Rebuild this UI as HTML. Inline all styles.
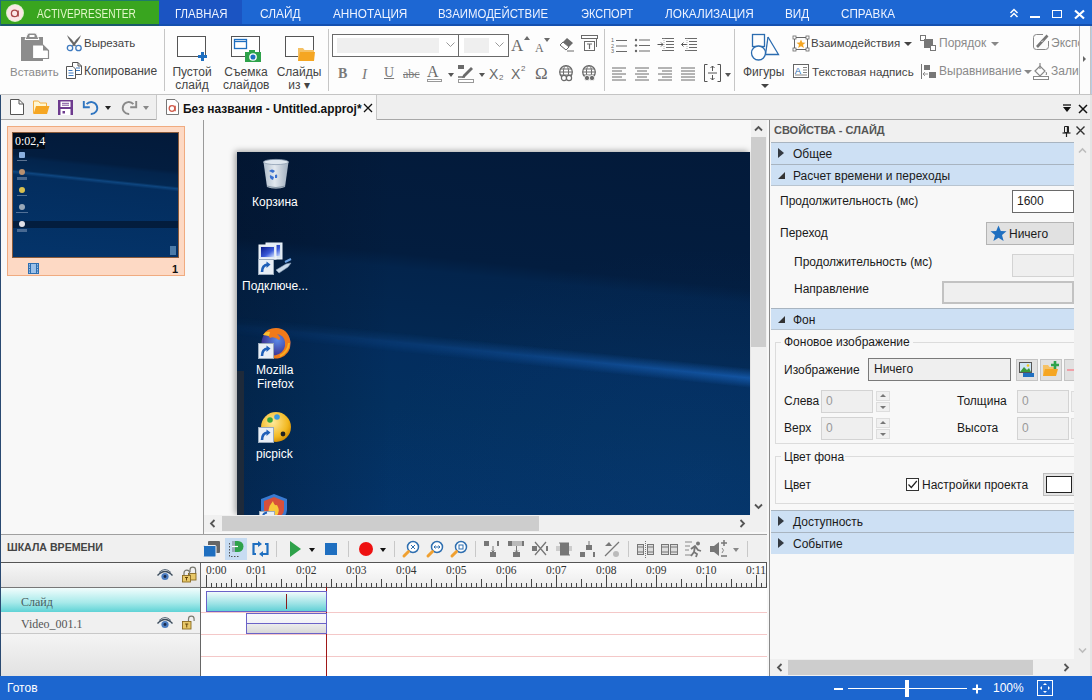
<!DOCTYPE html>
<html><head><meta charset="utf-8">
<style>
*{box-sizing:border-box;margin:0;padding:0}
html,body{width:1092px;height:700px;overflow:hidden;background:#f8f8f8}
body{font-family:"Liberation Sans",sans-serif;font-size:12px;color:#222;position:relative}
.a{position:absolute}
.t{position:absolute;white-space:nowrap;line-height:1}
svg{position:absolute;overflow:visible}
/* tab bar */
#tabs{left:0;top:0;width:1092px;height:26px;background:#1d67d3}
#tabs .tb{position:absolute;top:7px;color:#eef3ff;font-size:12.5px;line-height:14px;white-space:nowrap}
/* ribbon */
#ribbon{left:0;top:26px;width:1092px;height:69px;background:#fdfdfd;border-bottom:1px solid #c8c8c8}
.sep{position:absolute;width:1px;background:#c6c6c6}
.rl{position:absolute;color:#444;font-size:12px;line-height:13px;white-space:nowrap}
.gl{color:#8a8a8a}
/* props */
.sh{position:absolute;left:771px;width:303px;height:22px;background:#cde0f4;border-top:1px solid #a8b4c0}
.sh span{position:absolute;left:22px;top:5px;font-size:12px;line-height:13px;color:#1a1a1a}
.tri{position:absolute;left:7px;top:5px;width:0;height:0;border-top:5px solid transparent;border-bottom:5px solid transparent;border-left:6px solid #343a42}
.tri2{position:absolute;left:7px;top:7px;width:0;height:0;border-left:7px solid transparent;border-bottom:7px solid #333}
.pl{position:absolute;font-size:12px;line-height:13px;color:#1a1a1a;white-space:nowrap}
.inp{position:absolute;background:#efefef;border:1px solid #d3d3d3}
</style></head><body>

<!-- ================= TAB BAR ================= -->
<div id="tabs" class="a">
  <div class="a" style="left:0;top:0;width:159px;height:25px;background:#39a51f"></div>
  <div class="a" style="left:159px;top:0;width:83px;height:25px;background:#1b54c2"></div>
  <div class="a" style="left:0;top:24px;width:1092px;height:2px;background:#1450b0"></div>
  <div class="a" style="left:0;top:24px;width:159px;height:2px;background:#1a5a6a"></div>
  <div class="a" style="left:0;top:0;width:159px;height:1px;background:#1f7a6a"></div>
  <div class="a" style="left:0;top:0;width:1px;height:26px;background:#1f6a7a"></div>
  <div class="a" style="left:7px;top:5px;width:16px;height:16px;border-radius:50%;background:#fbe6e6;box-shadow:0 0 0 1px #d8f0c8"></div>
  <svg style="left:7px;top:5px" width="16" height="16"><circle cx="7.6" cy="8.4" r="3.2" fill="none" stroke="#a84848" stroke-width="1.3"/><path d="M11.2 5.5 V11.5" stroke="#a84848" stroke-width="1.3"/></svg>
  <div class="tb" style="left:37px;color:#e2f7c8;transform:scaleX(0.814);transform-origin:0 0">ACTIVEPRESENTER</div>
  <div class="tb" style="left:175px;transform:scaleX(0.914);transform-origin:0 0">ГЛАВНАЯ</div>
  <div class="tb" style="left:259.5px;transform:scaleX(0.953);transform-origin:0 0">СЛАЙД</div>
  <div class="tb" style="left:332.5px;transform:scaleX(0.942);transform-origin:0 0">АННОТАЦИЯ</div>
  <div class="tb" style="left:438px;transform:scaleX(0.914);transform-origin:0 0">ВЗАИМОДЕЙСТВИЕ</div>
  <div class="tb" style="left:581px;transform:scaleX(0.882);transform-origin:0 0">ЭКСПОРТ</div>
  <div class="tb" style="left:665px;transform:scaleX(0.943);transform-origin:0 0">ЛОКАЛИЗАЦИЯ</div>
  <div class="tb" style="left:785px;transform:scaleX(0.942);transform-origin:0 0">ВИД</div>
  <div class="tb" style="left:841px;transform:scaleX(0.934);transform-origin:0 0">СПРАВКА</div>
  <svg style="left:1008px;top:8px" width="12" height="10"><path d="M2.5 5 L6 1.5 L9.5 5 M2.5 9 L6 5.5 L9.5 9" fill="none" stroke="#fff" stroke-width="1.5"/></svg>
  <div class="a" style="left:1030px;top:16px;width:10px;height:2px;background:#fff"></div>
  <div class="a" style="left:1052px;top:10px;width:10px;height:8px;border:1.3px solid #fff;border-top-width:1.8px"></div>
  <svg style="left:1074px;top:10px" width="11" height="9"><path d="M1 0.5 L10 8.5 M10 0.5 L1 8.5" stroke="#fff" stroke-width="2.2"/></svg>
</div>


<!-- ================= RIBBON ================= -->
<div class="a" style="left:0;top:26px;width:1092px;height:69px;background:#fdfdfd;border-bottom:1px solid #c4c4c4"></div>
<div class="sep" style="left:164px;top:29px;height:62px"></div>
<div class="sep" style="left:328px;top:29px;height:62px"></div>
<div class="sep" style="left:604px;top:29px;height:62px"></div>
<div class="sep" style="left:734px;top:29px;height:62px"></div>
<!-- scroll btn -->
<div class="a" style="left:1079px;top:26px;width:12px;height:67px;background:#f4f4f4;border:1px solid #c8c8c8"></div>
<div class="a" style="left:1083px;top:55px;width:0;height:0;border-top:4px solid transparent;border-bottom:4px solid transparent;border-left:4px solid #555"></div>

<!-- paste -->
<svg style="left:20px;top:32px" width="30" height="31">
  <rect x="1" y="5" width="22" height="24" fill="#8c8c8c"/>
  <path d="M5 7.5 L7 3 Q7.5 1 9 1 H15 Q16.5 1 17 3 L19 7.5 Z" fill="#8c8c8c" stroke="#fdfdfd" stroke-width="1"/>
  <rect x="9.5" y="3" width="5" height="2" fill="#fdfdfd"/>
  <path d="M12.5 13 H23 L28.5 18.5 V26.5 H12.5 Z" fill="#fff" stroke="#8c8c8c" stroke-width="1.2"/>
  <path d="M23 13 L28.5 18.5 H23 Z" fill="#8c8c8c"/>
</svg>
<div class="rl gl" style="left:10px;top:66px;font-size:11.5px">Вставить</div>
<!-- cut -->
<svg style="left:65px;top:34px" width="18" height="18">
  <path d="M2 1 Q4 7 10 12.5 L11 11.5 Q7 5 2 1 Z" fill="#666"/>
  <path d="M16 1 Q14 7 8 12.5 L7 11.5 Q11 5 16 1 Z" fill="#666"/>
  <circle cx="5" cy="14" r="2.7" fill="none" stroke="#3f7bc0" stroke-width="1.3"/>
  <circle cx="13.5" cy="14" r="2.7" fill="none" stroke="#3f7bc0" stroke-width="1.3"/>
</svg>
<div class="rl" style="left:84px;top:37px;font-size:11.5px">Вырезать</div>
<!-- copy -->
<svg style="left:66px;top:62px" width="17" height="17">
  <path d="M6.5 0.5 H12 L15.5 4 V12.5 H6.5 Z" fill="#fff" stroke="#555"/>
  <path d="M12 0.5 V4 H15.5" fill="none" stroke="#555"/>
  <path d="M0.5 4.5 H7 L9.5 7 V16.5 H0.5 Z" fill="#fff" stroke="#555"/>
  <path d="M2.5 8.5 H6.5 M2.5 11 H7.5 M2.5 13.5 H7.5 M10 6 H14 M10 8.5 H14" stroke="#3f7bc0" stroke-width="1"/>
</svg>
<div class="rl" style="left:84px;top:65px">Копирование</div>

<!-- blank slide -->
<svg style="left:177px;top:36px" width="30" height="26">
  <rect x="0.5" y="0.5" width="28" height="20" fill="#fff" stroke="#555"/>
  <path d="M25.5 16 V25 M21 20.5 H30" stroke="#1f6fc0" stroke-width="3"/>
</svg>
<div class="rl" style="left:172px;top:66px;text-align:center;width:40px">Пустой<br>слайд</div>
<!-- capture -->
<svg style="left:231px;top:36px" width="31" height="26">
  <rect x="0.5" y="0.5" width="28" height="20" fill="#fff" stroke="#555"/>
  <rect x="3.5" y="3.5" width="12" height="9" fill="#fff" stroke="#1f6fc0" stroke-width="1.3"/>
  <path d="M3.5 5.5 H15.5" stroke="#1f6fc0" stroke-width="1.3"/>
  <rect x="14" y="16" width="16" height="10" fill="#2ea24a"/>
  <rect x="18" y="14" width="6" height="3" fill="#2ea24a"/>
  <circle cx="22" cy="21" r="3.2" fill="#1f6fc0" stroke="#fff" stroke-width="1.3"/>
</svg>
<div class="rl" style="left:223px;top:66px;text-align:center;width:46px">Съемка<br>слайдов</div>
<!-- slides from -->
<svg style="left:285px;top:36px" width="31" height="26">
  <rect x="0.5" y="0.5" width="28" height="20" fill="#fff" stroke="#555"/>
  <path d="M13 12 H18 L19.5 14 H29 V25 H13 Z" fill="#f5c165"/>
  <path d="M13 25 L15 16 H30 L29 25 Z" fill="#f5a623"/>
</svg>
<div class="rl" style="left:276px;top:66px;text-align:center;width:46px">Слайды<br>из &#x25BE;</div>

<!-- font combo -->
<div class="a" style="left:332px;top:34px;width:127px;height:23px;border:1px solid #6a6a6a;background:#fff"></div>
<div class="a" style="left:337px;top:38px;width:102px;height:15px;background:#efefef"></div>
<svg style="left:446px;top:42px" width="10" height="6"><path d="M0.5 0.5 L4.5 4.5 L8.5 0.5" fill="none" stroke="#999" stroke-width="1"/></svg>
<div class="a" style="left:458px;top:34px;width:51px;height:23px;border:1px solid #6a6a6a;background:#fff"></div>
<div class="a" style="left:464px;top:38px;width:25px;height:15px;background:#efefef"></div>
<svg style="left:495px;top:42px" width="10" height="6"><path d="M0.5 0.5 L4.5 4.5 L8.5 0.5" fill="none" stroke="#999" stroke-width="1"/></svg>
<!-- grow/shrink font -->
<div class="t" style="left:511px;top:37px;font-family:'Liberation Serif';font-size:17px;color:#6a6a6a">A</div>
<div class="a" style="left:524px;top:36px;width:0;height:0;border-left:3px solid transparent;border-right:3px solid transparent;border-bottom:4px solid #6a6a6a"></div>
<div class="t" style="left:535px;top:42px;font-family:'Liberation Serif';font-size:12px;color:#6a6a6a">A</div>
<div class="a" style="left:544px;top:38px;width:0;height:0;border-left:3px solid transparent;border-right:3px solid transparent;border-top:4px solid #6a6a6a"></div>
<!-- eraser -->
<svg style="left:558px;top:36px" width="18" height="16">
  <path d="M2 9 L9 2 L15 7 L8 14 Z" fill="#6a6a6a"/>
  <path d="M2 9 L5 6 L11 11 L8 14 Z" fill="#fff" stroke="#6a6a6a"/>
  <path d="M9 15 H16" stroke="#6a6a6a"/>
</svg>
<!-- textbox -->
<svg style="left:581px;top:35px" width="18" height="17">
  <rect x="0.5" y="0.5" width="16" height="3" fill="#fff" stroke="#6a6a6a"/>
  <rect x="3.5" y="6.5" width="10" height="9" fill="#fff" stroke="#6a6a6a"/>
  <path d="M6 9 H11 M8.5 9 V14" stroke="#6a6a6a" stroke-width="1.2"/>
  <path d="M15.5 3.5 V12" stroke="#6a6a6a"/>
</svg>
<!-- row 2: B I U abc -->
<div class="t" style="left:338px;top:67px;font-family:'Liberation Serif';font-weight:bold;font-size:14px;color:#7a7a7a">B</div>
<div class="t" style="left:362px;top:67px;font-family:'Liberation Serif';font-style:italic;font-size:15px;color:#7a7a7a">I</div>
<div class="t" style="left:384px;top:66px;font-family:'Liberation Serif';font-size:14px;color:#7a7a7a;text-decoration:underline">U</div>
<div class="t" style="left:403px;top:68px;font-family:'Liberation Serif';font-size:12px;color:#7a7a7a;text-decoration:line-through">abc</div>
<div class="t" style="left:427px;top:64px;font-family:'Liberation Serif';font-size:16px;color:#6a6a6a">A</div>
<div class="a" style="left:427px;top:79px;width:15px;height:3px;border:1px solid #999;background:#fff"></div>
<div class="a" style="left:448px;top:73px;width:0;height:0;border-left:3.5px solid transparent;border-right:3.5px solid transparent;border-top:4px solid #555"></div>
<svg style="left:458px;top:65px" width="17" height="18">
  <rect x="0" y="0" width="6" height="4" fill="#6a6a6a"/>
  <path d="M5 10 L13 2 L15 4 L7 12 L4 13 Z" fill="#6a6a6a"/>
  <rect x="0.5" y="14.5" width="15" height="3" fill="#fff" stroke="#999"/>
  <path d="M0 12 H7" stroke="#6a6a6a" stroke-width="1.5"/>
</svg>
<div class="a" style="left:479px;top:73px;width:0;height:0;border-left:3.5px solid transparent;border-right:3.5px solid transparent;border-top:4px solid #555"></div>
<div class="t" style="left:489px;top:67px;font-size:14px;color:#6a6a6a">X</div>
<div class="t" style="left:499px;top:74px;font-size:8px;color:#6a6a6a">2</div>
<div class="t" style="left:511px;top:67px;font-size:14px;color:#6a6a6a">X</div>
<div class="t" style="left:521px;top:65px;font-size:8px;color:#6a6a6a">2</div>
<div class="t" style="left:535px;top:65px;font-family:'Liberation Serif';font-size:17px;color:#6a6a6a">&#937;</div>
<svg style="left:558px;top:65px" width="18" height="17">
  <circle cx="8" cy="7" r="6.3" fill="none" stroke="#6a6a6a" stroke-width="1.3"/>
  <ellipse cx="8" cy="7" rx="2.6" ry="6.3" fill="none" stroke="#6a6a6a" stroke-width="1"/>
  <path d="M1.7 7 H14.3 M2.5 4 H13.5 M2.5 10 H13.5" stroke="#6a6a6a" stroke-width="1"/>
  <circle cx="6" cy="13" r="2.6" fill="#fff" stroke="#6a6a6a" stroke-width="1.2"/>
  <circle cx="11" cy="13" r="2.6" fill="#fff" stroke="#6a6a6a" stroke-width="1.2"/>
</svg>
<svg style="left:581px;top:65px" width="18" height="17">
  <circle cx="8" cy="7" r="6.3" fill="none" stroke="#6a6a6a" stroke-width="1.3"/>
  <ellipse cx="8" cy="7" rx="2.6" ry="6.3" fill="none" stroke="#6a6a6a" stroke-width="1"/>
  <path d="M1.7 7 H14.3 M2.5 4 H13.5 M2.5 10 H13.5" stroke="#6a6a6a" stroke-width="1"/>
  <circle cx="6" cy="13" r="2.6" fill="#6a6a6a" stroke="#fff" stroke-width="0.8"/>
  <circle cx="11" cy="13" r="2.6" fill="#6a6a6a" stroke="#fff" stroke-width="0.8"/>
</svg>

<!-- paragraph group -->
<svg style="left:611px;top:37px" width="18" height="16">
  <text x="0" y="5" font-size="5.5" fill="#666" font-family="Liberation Sans">1</text>
  <text x="0" y="10.5" font-size="5.5" fill="#666" font-family="Liberation Sans">2</text>
  <text x="0" y="16" font-size="5.5" fill="#666" font-family="Liberation Sans">3</text>
  <path d="M5 3.5 H16 M5 9 H16 M5 14.5 H16" stroke="#6a6a6a" stroke-width="1.1"/>
</svg>
<svg style="left:634px;top:37px" width="18" height="16">
  <circle cx="2" cy="3" r="1.2" fill="#666"/><circle cx="2" cy="8.5" r="1.2" fill="#666"/><circle cx="2" cy="14" r="1.2" fill="#666"/>
  <path d="M5 3 H16 M5 8.5 H16 M5 14 H16" stroke="#6a6a6a" stroke-width="1.1"/>
</svg>
<svg style="left:657px;top:37px" width="18" height="16">
  <path d="M5 1.5 H17 M9 4.5 H17 M9 7.5 H17 M9 10.5 H17 M5 13.5 H17" stroke="#6a6a6a" stroke-width="1"/>
  <path d="M0.5 7.5 H6 M4 5.5 L6 7.5 L4 9.5" fill="none" stroke="#555" stroke-width="1"/>
  <path d="M7 1 V15" stroke="#999" stroke-width="0.8" stroke-dasharray="1 1"/>
</svg>
<svg style="left:680px;top:37px" width="18" height="16">
  <path d="M5 1.5 H17 M9 4.5 H17 M9 7.5 H17 M9 10.5 H17 M5 13.5 H17" stroke="#6a6a6a" stroke-width="1"/>
  <path d="M7 7.5 H1.5 M3.5 5.5 L1.5 7.5 L3.5 9.5" fill="none" stroke="#555" stroke-width="1"/>
  <path d="M7 1 V15" stroke="#999" stroke-width="0.8" stroke-dasharray="1 1"/>
</svg>
<svg style="left:611px;top:66px" width="17" height="15">
  <path d="M1 2 H15 M1 5 H11 M1 8 H15 M1 11 H11 M1 14 H15" stroke="#6a6a6a" stroke-width="1"/>
</svg>
<svg style="left:634px;top:66px" width="17" height="15">
  <path d="M1 2 H15 M3 5 H13 M1 8 H15 M3 11 H13 M1 14 H15" stroke="#6a6a6a" stroke-width="1"/>
</svg>
<svg style="left:657px;top:66px" width="17" height="15">
  <path d="M1 2 H15 M5 5 H15 M1 8 H15 M5 11 H15 M1 14 H15" stroke="#6a6a6a" stroke-width="1"/>
</svg>
<svg style="left:680px;top:66px" width="17" height="15">
  <path d="M1 2 H15 M1 5 H15 M1 8 H15 M1 11 H15 M1 14 H15" stroke="#6a6a6a" stroke-width="1"/>
</svg>
<svg style="left:704px;top:64px" width="18" height="18">
  <path d="M3.5 0.5 H0.5 V17.5 H3.5 M13.5 0.5 H16.5 V17.5 H13.5" fill="none" stroke="#555"/>
  <path d="M4 9 H13 M8.5 2 V7 M6.5 4 L8.5 2 L10.5 4 M8.5 11 V16 M6.5 14 L8.5 16 L10.5 14" fill="none" stroke="#555" stroke-width="1"/>
</svg>
<div class="a" style="left:725px;top:73px;width:0;height:0;border-left:3.5px solid transparent;border-right:3.5px solid transparent;border-top:4px solid #555"></div>

<!-- shapes -->
<svg style="left:750px;top:33px" width="32" height="30">
  <rect x="2.5" y="1.5" width="12" height="12" fill="none" stroke="#2b6cb0" stroke-width="1.3"/>
  <path d="M18 4 L28.5 21.5 H15.5" fill="none" stroke="#2b6cb0" stroke-width="1.3"/>
  <circle cx="8.5" cy="20" r="7" fill="#fff" stroke="#2b6cb0" stroke-width="1.3"/>
  <path d="M15.5 21.5 L18 4" fill="none" stroke="#2b6cb0" stroke-width="1.3"/>
</svg>
<div class="rl" style="left:743px;top:66px">Фигуры</div>
<div class="a" style="left:761px;top:84px;width:0;height:0;border-left:4px solid transparent;border-right:4px solid transparent;border-top:4px solid #444"></div>
<!-- interactions -->
<svg style="left:793px;top:36px" width="16" height="15">
  <rect x="1.5" y="1.5" width="13" height="12" fill="none" stroke="#666" stroke-width="1"/>
  <rect x="0" y="0" width="3" height="3" fill="#fff" stroke="#666" stroke-width="0.8"/>
  <rect x="13" y="0" width="3" height="3" fill="#fff" stroke="#666" stroke-width="0.8"/>
  <rect x="0" y="12" width="3" height="3" fill="#fff" stroke="#666" stroke-width="0.8"/>
  <rect x="13" y="12" width="3" height="3" fill="#fff" stroke="#666" stroke-width="0.8"/>
  <path d="M8 3.5 L9.3 6.6 L12.5 6.8 L10 8.8 L10.9 12 L8 10.2 L5.1 12 L6 8.8 L3.5 6.8 L6.7 6.6 Z" fill="#f5a623"/>
</svg>
<div class="rl" style="left:811px;top:37px;font-size:11.5px">Взаимодействия</div>
<div class="a" style="left:904px;top:42px;width:0;height:0;border-left:4px solid transparent;border-right:4px solid transparent;border-top:4px solid #444"></div>
<!-- text caption -->
<svg style="left:793px;top:64px" width="16" height="14">
  <rect x="0.5" y="0.5" width="15" height="13" fill="#fff" stroke="#666"/>
  <text x="1.8" y="9.5" font-size="9.5" fill="#2b6cb0" font-family="Liberation Sans">A</text>
  <path d="M10 3.5 H14 M10 6 H14 M10 8.5 H14 M2 11 H14" stroke="#777" stroke-width="0.9"/>
</svg>
<div class="rl" style="left:812px;top:65px;font-size:11.6px">Текстовая надпись</div>
<!-- order -->
<svg style="left:920px;top:35px" width="17" height="17">
  <rect x="0.5" y="0.5" width="5" height="5" fill="#fff" stroke="#777"/>
  <rect x="4" y="4" width="9" height="9" fill="#777"/>
  <rect x="10.5" y="10.5" width="5" height="5" fill="#fff" stroke="#777"/>
</svg>
<div class="rl gl" style="left:939px;top:37px">Порядок</div>
<div class="a" style="left:991px;top:42px;width:0;height:0;border-left:4px solid transparent;border-right:4px solid transparent;border-top:4px solid #888"></div>
<!-- align -->
<svg style="left:920px;top:64px" width="17" height="15">
  <path d="M1.5 0 V15" stroke="#777"/>
  <rect x="4" y="1" width="6" height="5" fill="#777"/>
  <rect x="9" y="8" width="7" height="6" fill="#777"/>
  <path d="M3 10 H8 M5 8 L3 10 L5 12" fill="none" stroke="#777" stroke-width="0.8"/>
</svg>
<div class="rl gl" style="left:939px;top:65px">Выравнивание</div>
<div class="a" style="left:1024px;top:70px;width:0;height:0;border-left:4px solid transparent;border-right:4px solid transparent;border-top:4px solid #888"></div>
<!-- export -->
<svg style="left:1033px;top:34px" width="17" height="17">
  <path d="M10 0.5 H3.5 Q0.5 0.5 0.5 3.5 V13 Q0.5 15.5 3.5 15.5 H12.5 Q15.5 15.5 15.5 12.5 V7" fill="none" stroke="#888" stroke-width="1"/>
  <path d="M4 13 L14.5 1.5" stroke="#777" stroke-width="2.6"/>
  <path d="M8.5 8 L10 6.5" stroke="#fff" stroke-width="1"/>
</svg>
<div class="rl gl" style="left:1051px;top:37px">Экспорт</div>
<!-- fill -->
<svg style="left:1033px;top:63px" width="17" height="17">
  <path d="M2 8 L7 3 L12 8 L7 13 Z" fill="none" stroke="#888" stroke-width="1.2"/>
  <path d="M7 0 V6" stroke="#888" stroke-width="1.2"/>
  <path d="M13 9 Q14 11 13 12" stroke="#888"/>
  <rect x="0.5" y="13.5" width="15" height="3" fill="#fff" stroke="#888"/>
</svg>
<div class="rl gl" style="left:1051px;top:65px">Заливка</div>
<!-- cover scroll button over clipped text -->
<div class="a" style="left:1079px;top:26px;width:12px;height:68px;background:#fcfcfc;border-left:1px solid #b4b4b4;border-right:1px solid #c4c4c4"></div>
<div class="a" style="left:1091px;top:26px;width:1px;height:68px;background:#b8cce4"></div>
<div class="a" style="left:1083px;top:56px;width:0;height:0;border-top:3.5px solid transparent;border-bottom:3.5px solid transparent;border-left:3.5px solid #666"></div>


<!-- ================= QAT / DOC TAB ROW ================= -->
<div class="a" style="left:0;top:95px;width:1092px;height:25px;background:#efefef;border-bottom:1px solid #a8a8a8"></div>
<div class="a" style="left:156px;top:95px;width:221px;height:25px;background:#f8f8f8;border-left:1px solid #c8c8c8;border-right:1px solid #c8c8c8"></div>
<!-- new -->
<svg style="left:10px;top:99px" width="14" height="16">
  <path d="M0.5 0.5 H9 L13.5 5 V15.5 H0.5 Z" fill="#fff" stroke="#555"/>
  <path d="M9 0.5 V5 H13.5" fill="none" stroke="#555"/>
</svg>
<!-- open -->
<svg style="left:33px;top:100px" width="17" height="15">
  <path d="M0.5 13.5 V1 H5.5 L7 3 H13.5 V6" fill="#fff6d0" stroke="#f5b041"/>
  <path d="M0.5 14 L3 6 H16.5 L14 14 Z" fill="#f5a623"/>
</svg>
<!-- save -->
<svg style="left:58px;top:100px" width="16" height="15">
  <rect x="0" y="0" width="15" height="15" fill="#6d3a8e"/>
  <rect x="2.5" y="1.5" width="10" height="5.5" fill="#fff"/>
  <path d="M4 3.3 H11 M4 5.2 H11" stroke="#6d3a8e" stroke-width="0.9"/>
  <rect x="2.5" y="9" width="10" height="6" fill="#fff"/>
  <rect x="4.5" y="11" width="2.5" height="2.5" fill="#6d3a8e"/>
</svg>
<!-- undo -->
<svg style="left:82px;top:99px" width="18" height="17">
  <path d="M4.6 5.2 A6 6 0 1 1 8.8 15" fill="none" stroke="#2f75c0" stroke-width="1.9"/>
  <path d="M1.8 2 V8.2 H7.8" fill="none" stroke="#2f75c0" stroke-width="1.9"/>
</svg>
<div class="a" style="left:105px;top:106px;width:0;height:0;border-left:3.5px solid transparent;border-right:3.5px solid transparent;border-top:4px solid #222"></div>
<!-- redo -->
<svg style="left:120px;top:99px" width="18" height="17">
  <g transform="translate(18,0) scale(-1,1)">
  <path d="M4.6 5.2 A6 6 0 1 1 8.8 15" fill="none" stroke="#8a8a8a" stroke-width="1.9"/>
  <path d="M1.8 2 V8.2 H7.8" fill="none" stroke="#8a8a8a" stroke-width="1.9"/>
  </g>
</svg>
<div class="a" style="left:143px;top:106px;width:0;height:0;border-left:3.5px solid transparent;border-right:3.5px solid transparent;border-top:4px solid #888"></div>
<!-- doc tab -->
<svg style="left:166px;top:99px" width="14" height="16">
  <path d="M0.5 0.5 H9 L12.5 4 V15.5 H0.5 Z" fill="#fff" stroke="#777"/>
  <circle cx="6" cy="9.5" r="2.8" fill="none" stroke="#d05a4a" stroke-width="1.3"/><path d="M9.2 6.8 V12.3" stroke="#d05a4a" stroke-width="1.3"/>
</svg>
<div class="t" style="left:183px;top:103.5px;font-weight:bold;font-size:11.9px;color:#111">Без названия - Untitled.approj*</div>
<svg style="left:363px;top:103px" width="10" height="10"><path d="M1 1 L9 9 M9 1 L1 9" stroke="#111" stroke-width="1.3"/></svg>
<!-- right icons -->
<svg style="left:1063px;top:104px" width="8" height="9">
  <path d="M0 1 H8" stroke="#111" stroke-width="1.3"/>
  <path d="M0 3 H8 L4 8 Z" fill="#111"/>
</svg>
<svg style="left:1078px;top:104px" width="10" height="10"><path d="M1 1 L9 9 M9 1 L1 9" stroke="#111" stroke-width="1.5"/></svg>

<!-- ================= SLIDES PANEL ================= -->
<div class="a" style="left:0;top:120px;width:203px;height:414px;background:#f8f8f8"></div>
<div class="a" style="left:203px;top:120px;width:1px;height:414px;background:#9a9a9a"></div>
<div class="a" style="left:7px;top:126px;width:178px;height:150px;background:#fdd9c4;border:1px solid #f0ab80"></div>
<div class="a" style="left:12px;top:132px;width:167px;height:126px;border:1px solid #8a5a3a;overflow:hidden;background:linear-gradient(186deg,#031a3a 0%,#031d3f 27%,#03244c 30%,#032852 38%,#0e4680 39.5%,#032d5e 41.5%,#04346a 100%)">
  <div class="a" style="left:0;top:88px;width:167px;height:7px;background:rgba(4,16,36,.6)"></div>
  <div class="a" style="left:0;top:0;width:32px;height:16px;background:rgba(0,0,0,.6)"></div>
  <div class="a" style="left:157px;top:113px;width:6px;height:9px;background:#4a7aa8"></div>
  <div class="a" style="left:6px;top:19px;width:6px;height:6px;background:#8ab0e0;border-radius:1px"></div>
  <div class="a" style="left:4px;top:27px;width:10px;height:1px;background:rgba(200,210,230,.45)"></div>
  <div class="a" style="left:6px;top:36px;width:6px;height:6px;background:#b89070;border-radius:50%"></div>
  <div class="a" style="left:4px;top:44px;width:10px;height:3px;background:rgba(200,210,230,.35)"></div>
  <div class="a" style="left:6px;top:54px;width:6px;height:6px;background:#d8c050;border-radius:50%"></div>
  <div class="a" style="left:4px;top:62px;width:10px;height:1px;background:rgba(200,210,230,.4)"></div>
  <div class="a" style="left:6px;top:71px;width:6px;height:6px;background:#98a8b8;border-radius:50%"></div>
  <div class="a" style="left:3px;top:79px;width:12px;height:1px;background:rgba(200,210,230,.4)"></div>
  <div class="a" style="left:6px;top:88px;width:6px;height:6px;background:#e0e0e8;border-radius:50%"></div>
  <div class="a" style="left:4px;top:96px;width:10px;height:3px;background:rgba(200,210,230,.35)"></div>
</div>
<div class="t" style="left:15px;top:135px;font-family:'Liberation Serif';font-size:12px;color:#fff">0:02,4</div>
<svg style="left:28px;top:263px" width="11" height="11">
  <rect x="0.5" y="0.5" width="10" height="10" fill="#9cc0e8" stroke="#2f6fb0"/>
  <path d="M2.5 0.5 V10.5 M8.5 0.5 V10.5" stroke="#2f6fb0"/>
  <path d="M0.5 3 H2.5 M0.5 5.5 H2.5 M0.5 8 H2.5 M8.5 3 H10.5 M8.5 5.5 H10.5 M8.5 8 H10.5" stroke="#2f6fb0"/>
</svg>
<div class="t" style="left:172px;top:264px;font-weight:bold;font-size:11px;color:#111">1</div>



<!-- ================= CANVAS ================= -->
<div class="a" style="left:204px;top:120px;width:565px;height:414px;background:#f8f8f8"></div>
<!-- slide shadow -->
<div class="a" style="left:237px;top:152px;width:513px;height:363px;box-shadow:-2px -1px 6px rgba(0,0,0,.35)"></div>
<!-- slide -->
<div id="slide" class="a" style="left:237px;top:152px;width:513px;height:363px;overflow:hidden;background:linear-gradient(185.8deg,#031a3a 0%,#031d3f 33%,#03244c 36.5%,#032852 53.8%,#032d5e 55.2%,#03305f 70%,#04346a 100%)">
  <div class="a" style="left:0;top:0;width:513px;height:363px;background:linear-gradient(90deg,rgba(2,10,25,.3),transparent 30%)"></div>
  <div class="a" style="left:0;top:0;width:513px;height:363px;background:radial-gradient(ellipse at 90% 90%,rgba(20,80,150,.15),transparent 50%)"></div>
  <div class="a" style="left:-20px;top:164px;width:560px;height:20px;transform-origin:20px 10px;transform:rotate(5.8deg);background:linear-gradient(to bottom,transparent 0%,rgba(25,100,190,.75) 50%,transparent 100%);-webkit-mask-image:linear-gradient(to right,rgba(0,0,0,.05),rgba(0,0,0,.4) 45%,#000)"></div>
  <div class="a" style="left:0;top:219px;width:7px;height:144px;background:#1e2a3a"></div>
</div>
<!-- desktop icons -->
<svg style="left:262px;top:159px" width="28" height="31">
  <defs><linearGradient id="bin" x1="0" x2="1"><stop offset="0" stop-color="#b8c6d4"/><stop offset="0.45" stop-color="#eef3f8"/><stop offset="1" stop-color="#a8b6c6"/></linearGradient></defs>
  <path d="M1.5 3 H26.5 L23 28 Q14 31 5 28 Z" fill="url(#bin)" opacity="0.95"/>
  <ellipse cx="14" cy="3" rx="12.5" ry="2.6" fill="#dfe7ef" stroke="#8fa0b2" stroke-width="0.8"/>
  <path d="M7 12 Q10 9 13 12 L11 14 Z M8 16 Q7 20 11 21 L12 18 Z M13 16 Q16 14 15 19 L13 19 Z" fill="#3a70d0"/>
  <path d="M5 27 Q14 30 23 27" fill="none" stroke="#8898a8" stroke-width="1.2"/>
</svg>
<div class="t" style="left:252px;top:196px;color:#fff;font-size:12px">Корзина</div>
<svg style="left:258px;top:242px" width="34" height="34">
  <defs><linearGradient id="scr" x1="0" y1="0" x2="1" y2="1"><stop offset="0" stop-color="#0a1a8a"/><stop offset="0.6" stop-color="#3a5ad8"/><stop offset="1" stop-color="#cfe0ff"/></linearGradient></defs>
  <rect x="8" y="1" width="16" height="16" fill="#d8e4f0" stroke="#eef4fa"/>
  <rect x="10" y="3" width="12" height="11" fill="url(#scr)"/>
  <rect x="1" y="3" width="17" height="14" fill="#dfe8f2" stroke="#f4f8fc"/>
  <rect x="3" y="5" width="13" height="10" fill="url(#scr)"/>
  <rect x="0.5" y="17.5" width="15" height="15" fill="#e8eef6" stroke="#9aaabb" stroke-width="1"/><path d="M4 30 Q4 23 10 22.5" fill="none" stroke="#1f5fb8" stroke-width="2.6"/><path d="M8.5 19.5 L12.5 22.5 L8.5 26 Z" fill="#1f5fb8"/>
  <path d="M18 28 L28 22 L33 21 L30 25 L21 31 Z" fill="#c8d8e8" stroke="#8aa0b8" stroke-width="0.6"/>
  <path d="M27 20 L33 17" stroke="#6aa0e0" stroke-width="2"/>
</svg>
<div class="t" style="left:242px;top:280px;color:#fff;font-size:12px">Подключе...</div>
<svg style="left:258px;top:326px" width="34" height="34">
  <defs><radialGradient id="glb" cx="0.55" cy="0.4" r="0.6"><stop offset="0" stop-color="#5a8ae8"/><stop offset="1" stop-color="#3a2a8a"/></radialGradient></defs>
  <circle cx="18" cy="17" r="14.5" fill="url(#glb)"/>
  <path d="M5 9 Q9 2 18 2 Q30 2 32.5 16 Q33 28 22 32 Q12 34 7 28 Q14 31 21 28 Q28 24 27 16 Q26 9 19 8 Q24 12 21 14 Q16 10 12 12 Q9 7 5 9 Z" fill="#f07a1a"/>
  <path d="M5 9 Q8 5 12 6 L11 10 Z" fill="#f8c030"/>
  <path d="M22 30 Q30 26 31 17" fill="none" stroke="#f8b020" stroke-width="2"/>
  <rect x="0.5" y="17.5" width="15" height="15" fill="#e8eef6" stroke="#9aaabb" stroke-width="1"/><path d="M4 30 Q4 23 10 22.5" fill="none" stroke="#1f5fb8" stroke-width="2.6"/><path d="M8.5 19.5 L12.5 22.5 L8.5 26 Z" fill="#1f5fb8"/>
</svg>
<div class="t" style="left:256px;top:364px;color:#fff;font-size:12px">Mozilla</div>
<div class="t" style="left:257px;top:378px;color:#fff;font-size:12px">Firefox</div>
<svg style="left:258px;top:410px" width="34" height="34">
  <defs><radialGradient id="pp" cx="0.4" cy="0.35" r="0.7"><stop offset="0" stop-color="#ffe89a"/><stop offset="0.7" stop-color="#f2b820"/><stop offset="1" stop-color="#d08a00"/></radialGradient></defs>
  <circle cx="18" cy="17" r="15" fill="url(#pp)"/>
  <circle cx="12" cy="10" r="2.8" fill="#3aa83a"/>
  <circle cx="19" cy="7" r="2.8" fill="#3a9ae0"/>
  <circle cx="25" cy="24" r="2.4" fill="#222"/>
  <rect x="0.5" y="17.5" width="15" height="15" fill="#e8eef6" stroke="#9aaabb" stroke-width="1"/><path d="M4 30 Q4 23 10 22.5" fill="none" stroke="#1f5fb8" stroke-width="2.6"/><path d="M8.5 19.5 L12.5 22.5 L8.5 26 Z" fill="#1f5fb8"/>
</svg>
<div class="t" style="left:256px;top:448px;color:#fff;font-size:12px">picpick</div>
<svg style="left:259px;top:494px" width="32" height="21">
  <path d="M2 5 L15 0 L28 5 V16 Q28 24 15 28 Q2 24 2 16 Z" fill="#3a7ad0"/>
  <path d="M5 7 L15 3 L25 7 V16 Q25 22 15 25 Q5 22 5 16 Z" fill="#d8503a"/>
  <path d="M10 21 Q8 14 14 7 Q15 12 18 11 Q22 18 17 22 Z" fill="#f8c83a"/>
  <rect x="0.5" y="17.5" width="15" height="4" fill="#e8eef6" stroke="#9aaabb" stroke-width="1"/>
  <path d="M4 21 Q5 19 8 18.5" fill="none" stroke="#1f5fb8" stroke-width="2"/>
</svg>
<!-- vertical scrollbar -->
<div class="a" style="left:751px;top:120px;width:16px;height:395px;background:#f0f0f0"></div>
<div class="a" style="left:751px;top:137px;width:15px;height:210px;background:#cdcdcd"></div>
<svg style="left:754px;top:125px" width="10" height="7"><path d="M1 5.5 L4.5 2 L8 5.5" fill="none" stroke="#555" stroke-width="1.8"/></svg>
<svg style="left:754px;top:503px" width="10" height="7"><path d="M1 1.5 L4.5 5 L8 1.5" fill="none" stroke="#555" stroke-width="1.8"/></svg>
<!-- horizontal scrollbar -->
<div class="a" style="left:204px;top:515px;width:563px;height:17px;background:#f0f0f0"></div>
<div class="a" style="left:222px;top:516px;width:317px;height:15px;background:#cdcdcd"></div>
<svg style="left:209px;top:519px" width="7" height="10"><path d="M5.5 1 L2 4.5 L5.5 8" fill="none" stroke="#555" stroke-width="1.8"/></svg>
<svg style="left:739px;top:519px" width="7" height="10"><path d="M1.5 1 L5 4.5 L1.5 8" fill="none" stroke="#555" stroke-width="1.8"/></svg>



<!-- ================= TIMELINE ================= -->
<div class="a" style="left:0;top:534px;width:767px;height:142px;background:#f0f0f0;border-top:1px solid #a0a0a0"></div>
<div class="t" style="left:7px;top:542px;font-weight:bold;font-size:10.6px;color:#444">ШКАЛА ВРЕМЕНИ</div>
<!-- toolbar icons -->
<svg style="left:203px;top:540px" width="19" height="18">
  <rect x="5" y="1" width="12" height="12" rx="1" fill="#666"/>
  <rect x="0.5" y="5.5" width="12.5" height="11.5" rx="1" fill="#1f6fc0" stroke="#f0f0f0" stroke-width="1"/>
</svg>
<div class="a" style="left:225px;top:538px;width:22px;height:22px;background:#c7dcf2"></div>
<svg style="left:227px;top:540px" width="19" height="19">
  <path d="M2.5 3 V16.5 H13" fill="none" stroke="#555" stroke-dasharray="1.5 1.5"/>
  <rect x="5" y="1" width="3" height="11" fill="#9ab"/>
  <path d="M8 1 H11 A5.5 5.5 0 0 1 11 12 H8 Z" fill="#2ea24a"/>
  <path d="M5 6.5 H11" stroke="#fff" stroke-width="1.2"/>
</svg>
<svg style="left:252px;top:541px" width="17" height="17">
  <path d="M6 3 H1.5 V13 H4 M11 13 H15.5 V3 H13" fill="none" stroke="#1f6fc0" stroke-width="2.2"/>
  <path d="M6 0 L10 3 L6 6 Z M11 10 L7 13 L11 16 Z" fill="#1f6fc0"/>
</svg>
<div class="sep" style="left:276px;top:541px;height:16px;background:#c8c8c8"></div>
<svg style="left:290px;top:541px" width="12" height="16"><path d="M0 0 L11 8 L0 16 Z" fill="#2ea24a"/></svg>
<div class="a" style="left:309px;top:548px;width:0;height:0;border-left:3.5px solid transparent;border-right:3.5px solid transparent;border-top:4px solid #111"></div>
<div class="a" style="left:325px;top:543px;width:12px;height:12px;background:#1f6fc0"></div>
<div class="sep" style="left:348px;top:541px;height:16px;background:#c8c8c8"></div>
<div class="a" style="left:359px;top:542px;width:14px;height:14px;border-radius:50%;background:#ee1111"></div>
<div class="a" style="left:380px;top:548px;width:0;height:0;border-left:3.5px solid transparent;border-right:3.5px solid transparent;border-top:4px solid #111"></div>
<div class="sep" style="left:394px;top:541px;height:16px;background:#c8c8c8"></div>
<svg style="left:402px;top:540px" width="18" height="18">
  <circle cx="11" cy="7" r="5.5" fill="#fff" stroke="#2f6fb0" stroke-width="1.5"/>
  <path d="M6.5 11.5 L2 16" stroke="#f0a030" stroke-width="3" stroke-linecap="round"/>
  <path d="M9 5 L13 9 M13 5 L9 9" stroke="#2f6fb0" stroke-width="1"/>
</svg>
<svg style="left:426px;top:540px" width="18" height="18">
  <circle cx="11" cy="7" r="5.5" fill="#fff" stroke="#2f6fb0" stroke-width="1.5"/>
  <path d="M6.5 11.5 L2 16" stroke="#f0a030" stroke-width="3" stroke-linecap="round"/>
  <path d="M8 7 H14 M9.5 5.5 L8 7 L9.5 8.5 M12.5 5.5 L14 7 L12.5 8.5" fill="none" stroke="#2f6fb0" stroke-width="1"/>
</svg>
<svg style="left:450px;top:540px" width="18" height="18">
  <circle cx="11" cy="7" r="5.5" fill="#fff" stroke="#2f6fb0" stroke-width="1.5"/>
  <path d="M6.5 11.5 L2 16" stroke="#f0a030" stroke-width="3" stroke-linecap="round"/>
  <rect x="9" y="5" width="4" height="4" fill="none" stroke="#2f6fb0" stroke-width="1"/>
</svg>
<div class="sep" style="left:475px;top:541px;height:16px;background:#c8c8c8"></div>
<svg style="left:484px;top:541px" width="17" height="16">
  <rect x="0" y="0" width="5" height="5" fill="#777"/><rect x="13" y="0" width="2" height="5" fill="#777"/>
  <rect x="6" y="11" width="6" height="5" fill="#777"/><path d="M9 5 V11 M7.5 9.5 L9 11 L10.5 9.5" fill="none" stroke="#777"/>
</svg>
<svg style="left:508px;top:541px" width="17" height="16">
  <rect x="0" y="0" width="4" height="5" fill="#777"/><rect x="4" y="0" width="10" height="5" fill="#bbb"/><rect x="14" y="0" width="2" height="5" fill="#777"/>
  <rect x="5" y="11" width="7" height="5" fill="#777"/><path d="M8.5 5 V11 M7 9.5 L8.5 11 L10 9.5" fill="none" stroke="#777"/>
</svg>
<svg style="left:532px;top:541px" width="17" height="16">
  <rect x="0" y="5" width="5" height="5" fill="#777"/><rect x="14" y="5" width="2" height="5" fill="#777"/>
  <path d="M3 1 L14 14 M14 1 L3 14" stroke="#777" stroke-width="1.3"/>
</svg>
<svg style="left:556px;top:541px" width="17" height="16">
  <rect x="0" y="5" width="16" height="5" fill="#ccc"/><rect x="4" y="2" width="9" height="12" fill="#777"/>
  <path d="M3 2 H13 M4 14 H14" stroke="#777"/>
</svg>
<svg style="left:580px;top:541px" width="17" height="16">
  <rect x="0" y="11" width="5" height="5" fill="#777"/><rect x="13" y="11" width="2" height="5" fill="#777"/>
  <rect x="6" y="4" width="6" height="5" fill="#777"/><path d="M9 0 V4" stroke="#777"/>
</svg>
<svg style="left:604px;top:541px" width="17" height="16">
  <path d="M1 15 L15 1" stroke="#777" stroke-width="1.3"/>
  <path d="M1 5 L5 1 L8 5 Z" fill="#777"/><circle cx="12" cy="13" r="3" fill="#bbb"/>
</svg>
<div class="sep" style="left:628px;top:541px;height:16px;background:#c8c8c8"></div>
<svg style="left:637px;top:541px" width="17" height="17">
  <rect x="0.5" y="3.5" width="6" height="10" fill="#ddd" stroke="#777"/><rect x="10.5" y="3.5" width="6" height="10" fill="#ddd" stroke="#777"/>
  <path d="M0.5 6 H6.5 M0.5 11 H6.5 M10.5 6 H16.5 M10.5 11 H16.5" stroke="#777"/>
  <path d="M8.5 0 V17" stroke="#777" stroke-dasharray="1 1"/>
</svg>
<svg style="left:661px;top:542px" width="17" height="15">
  <rect x="0.5" y="2.5" width="7" height="10" fill="#ddd" stroke="#777"/><rect x="9.5" y="2.5" width="7" height="10" fill="#ddd" stroke="#777"/>
  <path d="M0.5 5 H7.5 M0.5 10 H7.5 M9.5 5 H16.5 M9.5 10 H16.5" stroke="#777"/>
</svg>
<svg style="left:685px;top:541px" width="17" height="17">
  <path d="M0 1 H7 M0 5 H5 M0 9 H4 M0 14 H6" stroke="#888"/>
  <circle cx="13" cy="2.5" r="2" fill="#777"/>
  <path d="M6 8 L10 5 L13 9 L16 10 M10 5 L9 11 L12 13 L11 16 M9 11 L6 15" fill="none" stroke="#777" stroke-width="1.8"/>
</svg>
<svg style="left:710px;top:540px" width="18" height="18">
  <path d="M0 6 H4 L9 2 V16 L4 12 H0 Z" fill="#777"/>
  <path d="M14 0 V6 M11 3 H17 M11 16 H17" stroke="#777" stroke-width="1.5"/>
  <path d="M12 8 Q15 10 12 13" fill="none" stroke="#888"/>
</svg>
<div class="a" style="left:733px;top:548px;width:0;height:0;border-left:3.5px solid transparent;border-right:3.5px solid transparent;border-top:4px solid #888"></div>
<div class="sep" style="left:747px;top:541px;height:16px;background:#c8c8c8"></div>

<!-- track header column -->
<div class="a" style="left:0;top:562px;width:767px;height:1px;background:#555"></div>
<div class="a" style="left:1px;top:563px;width:199px;height:24px;background:linear-gradient(#f6f6f6,#e4e4e4)"></div>
<div class="a" style="left:0;top:587px;width:200px;height:1px;background:#777"></div>
<div class="a" style="left:1px;top:588px;width:199px;height:24px;background:linear-gradient(#f2fdfd 0%,#a8eaea 60%,#5fd3d6 100%)"></div>
<div class="t" style="left:21px;top:596px;font-family:'Liberation Serif';font-size:12px;color:#4a5e60">Слайд</div>
<div class="a" style="left:1px;top:612px;width:199px;height:22px;background:#f0f0f0;border-bottom:1px solid #c8c8c8"></div>
<div class="t" style="left:21px;top:618px;font-family:'Liberation Serif';font-size:12px;color:#555">Video_001.1</div>
<div class="a" style="left:1px;top:634px;width:199px;height:42px;background:linear-gradient(#f4f4f4,#e2e2e2)"></div>
<div class="a" style="left:200px;top:563px;width:1px;height:113px;background:#666"></div>
<!-- eye & lock icons -->
<svg style="left:157px;top:568px" width="16" height="13">
  <path d="M1 8 Q8 2 15 8 Q8 13 1 8 Z" fill="#e4ecf4"/>
  <circle cx="8" cy="8.5" r="3.6" fill="#4a7cc0"/><circle cx="8" cy="8.5" r="1.4" fill="#1a2a4a"/>
  <path d="M0.5 7.5 Q8 -0.5 15.5 7.5" fill="none" stroke="#3a4a5a" stroke-width="1.4"/>
  <path d="M2 4.5 Q8 -1.5 14 4.5" fill="none" stroke="#5a6a7a" stroke-width="1"/>
</svg>
<svg style="left:181px;top:566px" width="16" height="17">
  <path d="M9 6 V4 A2.8 2.8 0 0 1 14.6 4 V7" fill="none" stroke="#7a7a70" stroke-width="1.2"/>
  <rect x="7.5" y="7.5" width="7.5" height="6.5" fill="#e8c868" stroke="#8a6a20" stroke-width="0.9"/>
  <path d="M3 9 V7 A2.8 2.8 0 0 1 8.6 7 V9" fill="none" stroke="#7a7a70" stroke-width="1.2"/>
  <rect x="1.5" y="9.5" width="8" height="6.5" fill="#e8c868" stroke="#8a6a20" stroke-width="0.9"/>
  <path d="M4 11.5 H7 M5.5 11.5 V14.5" stroke="#5a3a00" stroke-width="0.9"/>
</svg>
<svg style="left:157px;top:616px" width="16" height="13">
  <path d="M1 8 Q8 2 15 8 Q8 13 1 8 Z" fill="#e4ecf4"/>
  <circle cx="8" cy="8.5" r="3.6" fill="#4a7cc0"/><circle cx="8" cy="8.5" r="1.4" fill="#1a2a4a"/>
  <path d="M0.5 7.5 Q8 -0.5 15.5 7.5" fill="none" stroke="#3a4a5a" stroke-width="1.4"/>
  <path d="M2 4.5 Q8 -1.5 14 4.5" fill="none" stroke="#5a6a7a" stroke-width="1"/>
</svg>
<svg style="left:182px;top:616px" width="14" height="14">
  <path d="M6.5 5 V3 A2.8 2.8 0 0 1 12.1 3 V5" fill="none" stroke="#7a7a70" stroke-width="1.2"/>
  <rect x="0.5" y="5.5" width="8.5" height="7.5" fill="#e8c868" stroke="#8a6a20" stroke-width="0.9"/>
  <path d="M3.2 8 H6.3 M4.75 8 V11.5" stroke="#5a3a00" stroke-width="0.9"/>
</svg>

<!-- ruler -->
<div class="a" style="left:201px;top:563px;width:566px;height:24px;background:linear-gradient(#fdfdfd,#ececec);border-right:1px solid #555"></div>
<div class="a" style="left:201px;top:587px;width:566px;height:1px;background:#555"></div>
<svg style="left:200px;top:563px" width="567" height="24"><path d="M6.5 12 V24 M11.5 20 V24 M16.5 20 V24 M21.5 20 V24 M26.5 20 V24 M31.5 16 V24 M36.5 20 V24 M41.5 20 V24 M46.5 20 V24 M51.5 20 V24 M56.5 12 V24 M61.5 20 V24 M66.5 20 V24 M71.5 20 V24 M76.5 20 V24 M81.5 16 V24 M86.5 20 V24 M91.5 20 V24 M96.5 20 V24 M101.5 20 V24 M106.5 12 V24 M111.5 20 V24 M116.5 20 V24 M121.5 20 V24 M126.5 20 V24 M131.5 16 V24 M136.5 20 V24 M141.5 20 V24 M146.5 20 V24 M151.5 20 V24 M156.5 12 V24 M161.5 20 V24 M166.5 20 V24 M171.5 20 V24 M176.5 20 V24 M181.5 16 V24 M186.5 20 V24 M191.5 20 V24 M196.5 20 V24 M201.5 20 V24 M206.5 12 V24 M211.5 20 V24 M216.5 20 V24 M221.5 20 V24 M226.5 20 V24 M231.5 16 V24 M236.5 20 V24 M241.5 20 V24 M246.5 20 V24 M251.5 20 V24 M256.5 12 V24 M261.5 20 V24 M266.5 20 V24 M271.5 20 V24 M276.5 20 V24 M281.5 16 V24 M286.5 20 V24 M291.5 20 V24 M296.5 20 V24 M301.5 20 V24 M306.5 12 V24 M311.5 20 V24 M316.5 20 V24 M321.5 20 V24 M326.5 20 V24 M331.5 16 V24 M336.5 20 V24 M341.5 20 V24 M346.5 20 V24 M351.5 20 V24 M356.5 12 V24 M361.5 20 V24 M366.5 20 V24 M371.5 20 V24 M376.5 20 V24 M381.5 16 V24 M386.5 20 V24 M391.5 20 V24 M396.5 20 V24 M401.5 20 V24 M406.5 12 V24 M411.5 20 V24 M416.5 20 V24 M421.5 20 V24 M426.5 20 V24 M431.5 16 V24 M436.5 20 V24 M441.5 20 V24 M446.5 20 V24 M451.5 20 V24 M456.5 12 V24 M461.5 20 V24 M466.5 20 V24 M471.5 20 V24 M476.5 20 V24 M481.5 16 V24 M486.5 20 V24 M491.5 20 V24 M496.5 20 V24 M501.5 20 V24 M506.5 12 V24 M511.5 20 V24 M516.5 20 V24 M521.5 20 V24 M526.5 20 V24 M531.5 16 V24 M536.5 20 V24 M541.5 20 V24 M546.5 20 V24 M551.5 20 V24 M556.5 12 V24 M561.5 20 V24 M566.5 20 V24" stroke="#444" stroke-width="1"/></svg>
<div class="t" style="left:206px;top:565px;font-family:'Liberation Serif';font-size:11.5px;color:#333">0:00</div>
<div class="t" style="left:246px;top:565px;font-family:'Liberation Serif';font-size:11.5px;color:#333">0:01</div>
<div class="t" style="left:296px;top:565px;font-family:'Liberation Serif';font-size:11.5px;color:#333">0:02</div>
<div class="t" style="left:346px;top:565px;font-family:'Liberation Serif';font-size:11.5px;color:#333">0:03</div>
<div class="t" style="left:396px;top:565px;font-family:'Liberation Serif';font-size:11.5px;color:#333">0:04</div>
<div class="t" style="left:446px;top:565px;font-family:'Liberation Serif';font-size:11.5px;color:#333">0:05</div>
<div class="t" style="left:496px;top:565px;font-family:'Liberation Serif';font-size:11.5px;color:#333">0:06</div>
<div class="t" style="left:546px;top:565px;font-family:'Liberation Serif';font-size:11.5px;color:#333">0:07</div>
<div class="t" style="left:596px;top:565px;font-family:'Liberation Serif';font-size:11.5px;color:#333">0:08</div>
<div class="t" style="left:646px;top:565px;font-family:'Liberation Serif';font-size:11.5px;color:#333">0:09</div>
<div class="t" style="left:696px;top:565px;font-family:'Liberation Serif';font-size:11.5px;color:#333">0:10</div>
<div class="t" style="left:746px;top:565px;font-family:'Liberation Serif';font-size:11.5px;color:#333">0:11</div>

<!-- tracks area -->
<div class="a" style="left:201px;top:588px;width:566px;height:88px;background:#fff"></div>
<div class="a" style="left:201px;top:612px;width:566px;height:1px;background:#f4c8c8"></div>
<div class="a" style="left:201px;top:634px;width:566px;height:1px;background:#f4c8c8"></div>
<div class="a" style="left:201px;top:656px;width:566px;height:1px;background:#f4c8c8"></div>
<!-- playhead -->
<div class="a" style="left:326px;top:587px;width:1px;height:89px;background:#a01818"></div>
<!-- slide bar -->
<div class="a" style="left:206px;top:591px;width:121px;height:21px;border:1px solid #6a62c8;background:linear-gradient(#f0fbfb,#9fe3e6 60%,#62d0d6)"></div>
<div class="a" style="left:286px;top:594px;width:1px;height:15px;background:#8a1a1a"></div>
<!-- video bar -->
<div class="a" style="left:246px;top:613px;width:81px;height:21px;border:1px solid #6a62c8;background:linear-gradient(#f8f8fc,#ececf0)"></div>
<div class="a" style="left:247px;top:623px;width:79px;height:1px;background:#6a62c8"></div>
<div class="a" style="left:247px;top:624px;width:79px;height:9px;background:linear-gradient(#ececec,#d8d8d8)"></div>


<!-- ================= PROPERTIES ================= -->
<div class="a" style="left:769px;top:120px;width:1px;height:556px;background:#8a8a8a"></div>
<div class="a" style="left:770px;top:120px;width:322px;height:556px;background:#f8f8f8"></div>
<div class="a" style="left:1090px;top:95px;width:2px;height:581px;background:#e4e4e4"></div>
<div class="a" style="left:770px;top:120px;width:320px;height:22px;background:#f0f0f0"></div>
<div class="t" style="left:774px;top:125px;font-weight:bold;font-size:11px;color:#555">СВОЙСТВА - СЛАЙД</div>
<svg style="left:1062px;top:126px" width="9" height="11">
  <path d="M2.5 0.5 H6.5 V6.5 H2.5 Z" fill="none" stroke="#222" stroke-width="1"/>
  <path d="M5.5 0.5 V6.5" stroke="#222" stroke-width="1.3"/>
  <path d="M0.5 7 H8.5" stroke="#222" stroke-width="1.2"/>
  <path d="M4.5 7 V11" stroke="#222" stroke-width="1.2"/>
</svg>
<svg style="left:1076px;top:126px" width="9" height="9"><path d="M0.5 0.5 L8.5 8.5 M8.5 0.5 L0.5 8.5" stroke="#333" stroke-width="1.4"/></svg>
<!-- v scrollbar -->
<div class="a" style="left:1074px;top:142px;width:16px;height:517px;background:#f0f0f0"></div>
<svg style="left:1078px;top:147px" width="10" height="7"><path d="M1 5.5 L4.5 2 L8 5.5" fill="none" stroke="#bdbdbd" stroke-width="1.6"/></svg>
<svg style="left:1078px;top:647px" width="10" height="7"><path d="M1 1.5 L4.5 5 L8 1.5" fill="none" stroke="#bdbdbd" stroke-width="1.6"/></svg>
<!-- h scrollbar -->
<div class="a" style="left:770px;top:659px;width:320px;height:17px;background:#f0f0f0"></div>
<div class="a" style="left:788px;top:660px;width:245px;height:15px;background:#cdcdcd"></div>
<svg style="left:776px;top:663px" width="7" height="10"><path d="M5.5 1 L2 4.5 L5.5 8" fill="none" stroke="#555" stroke-width="1.8"/></svg>
<svg style="left:1063px;top:663px" width="7" height="10"><path d="M1.5 1 L5 4.5 L1.5 8" fill="none" stroke="#555" stroke-width="1.8"/></svg>

<!-- section: general -->
<div class="sh" style="top:142px"><div class="tri"></div><span>Общее</span></div>
<div class="sh" style="top:164px"><div class="tri2"></div><span>Расчет времени и переходы</span></div>
<div class="a" style="left:771px;top:185px;width:303px;height:1px;background:#b8c4d0"></div>
<div class="pl" style="left:780px;top:195px">Продолжительность (мс)</div>
<div class="a" style="left:1012px;top:190px;width:62px;height:23px;background:#fff;border:1px solid #6a6a6a"></div>
<div class="pl" style="left:1017px;top:195px">1600</div>
<div class="pl" style="left:780px;top:227px">Переход</div>
<div class="a" style="left:986px;top:222px;width:88px;height:23px;background:#e1e1e1;border:1px solid #b4b4b4"></div>
<svg style="left:990px;top:225px" width="17" height="17"><path d="M8.5 0.5 L10.8 6 L16.5 6.3 L12 10 L13.6 16 L8.5 12.7 L3.4 16 L5 10 L0.5 6.3 L6.2 6 Z" fill="#1f6fc0"/></svg>
<div class="pl" style="left:1009px;top:228px">Ничего</div>
<div class="pl" style="left:794px;top:256px">Продолжительность (мс)</div>
<div class="inp" style="left:1012px;top:254px;width:62px;height:23px"></div>
<div class="pl" style="left:794px;top:283px">Направление</div>
<div class="inp" style="left:942px;top:281px;width:132px;height:23px;border-color:#c2c2c2;border-width:2px"></div>

<div class="sh" style="top:308px"><div class="tri2"></div><span>Фон</span></div>
<div class="a" style="left:771px;top:329px;width:303px;height:1px;background:#b8c4d0"></div>
<!-- group 1 -->
<div class="a" style="left:775px;top:342px;width:299px;height:102px;border:1px solid #dcdcdc;border-right:none"></div>
<div class="a" style="left:781px;top:335px;width:132px;height:14px;background:#f8f8f8"></div>
<div class="pl" style="left:784px;top:336px">Фоновое изображение</div>
<div class="pl" style="left:784px;top:364px">Изображение</div>
<div class="a" style="left:868px;top:358px;width:143px;height:23px;background:#efefef;border:1px solid #7a7a7a"></div>
<div class="pl" style="left:874px;top:363px">Ничего</div>
<div class="a" style="left:1016px;top:359px;width:22px;height:22px;background:#e1e1e1;border:1px solid #c4c4c4"></div>
<svg style="left:1019px;top:362px" width="16" height="16">
  <rect x="0.5" y="0.5" width="12" height="10" fill="#cfe6f5" stroke="#555"/>
  <path d="M1 10 L5 5 L8 8 L10 6 L12 10 Z" fill="#3a9a3a"/>
  <circle cx="9" cy="3.5" r="1.3" fill="#f5c518"/>
  <rect x="4" y="11" width="11" height="4" fill="#1f6fc0"/>
</svg>
<div class="a" style="left:1040px;top:359px;width:22px;height:22px;background:#e1e1e1;border:1px solid #c4c4c4"></div>
<svg style="left:1042px;top:361px" width="18" height="17">
  <path d="M1 15 V4 H6 L7.5 6 H14 V15 Z" fill="#f5c165"/>
  <path d="M1 15 L3 8 H16 L14 15 Z" fill="#f5a623"/>
  <path d="M13 0 V8 M9 4 H17" stroke="#2ea24a" stroke-width="2.6"/>
</svg>
<div class="a" style="left:1064px;top:359px;width:10px;height:22px;background:#e1e1e1;border:1px solid #c4c4c4;border-right:none"></div>
<div class="a" style="left:1067px;top:369px;width:7px;height:2px;background:#f0a0a8"></div>

<div class="pl" style="left:784px;top:395px">Слева</div>
<div class="inp" style="left:821px;top:390px;width:52px;height:23px"></div>
<div class="pl" style="left:826px;top:395px;color:#999">0</div>
<div class="a" style="left:876px;top:391px;width:14px;height:10px;background:#f0f0f0;border:1px solid #ddd"></div>
<div class="a" style="left:876px;top:402px;width:14px;height:10px;background:#f0f0f0;border:1px solid #ddd"></div>
<div class="a" style="left:880px;top:394px;width:0;height:0;border-left:3px solid transparent;border-right:3px solid transparent;border-bottom:3px solid #777"></div>
<div class="a" style="left:880px;top:406px;width:0;height:0;border-left:3px solid transparent;border-right:3px solid transparent;border-top:3px solid #777"></div>
<div class="pl" style="left:784px;top:422px">Верх</div>
<div class="inp" style="left:821px;top:417px;width:52px;height:23px"></div>
<div class="pl" style="left:826px;top:422px;color:#999">0</div>
<div class="a" style="left:876px;top:418px;width:14px;height:10px;background:#f0f0f0;border:1px solid #ddd"></div>
<div class="a" style="left:876px;top:429px;width:14px;height:10px;background:#f0f0f0;border:1px solid #ddd"></div>
<div class="a" style="left:880px;top:421px;width:0;height:0;border-left:3px solid transparent;border-right:3px solid transparent;border-bottom:3px solid #777"></div>
<div class="a" style="left:880px;top:433px;width:0;height:0;border-left:3px solid transparent;border-right:3px solid transparent;border-top:3px solid #777"></div>
<div class="pl" style="left:957px;top:395px">Толщина</div>
<div class="inp" style="left:1017px;top:390px;width:52px;height:23px"></div>
<div class="pl" style="left:1022px;top:395px;color:#999">0</div>
<div class="a" style="left:1071px;top:391px;width:3px;height:21px;background:#f0f0f0;border:1px solid #ddd;border-right:none"></div>
<div class="pl" style="left:957px;top:422px">Высота</div>
<div class="inp" style="left:1017px;top:417px;width:52px;height:23px"></div>
<div class="pl" style="left:1022px;top:422px;color:#999">0</div>
<div class="a" style="left:1071px;top:418px;width:3px;height:21px;background:#f0f0f0;border:1px solid #ddd;border-right:none"></div>
<!-- group 2 -->
<div class="a" style="left:775px;top:456px;width:299px;height:48px;border:1px solid #dcdcdc;border-right:none"></div>
<div class="a" style="left:781px;top:449px;width:64px;height:14px;background:#f8f8f8"></div>
<div class="pl" style="left:784px;top:451px">Цвет фона</div>
<div class="pl" style="left:784px;top:479px">Цвет</div>
<div class="a" style="left:906px;top:478px;width:13px;height:13px;background:#fff;border:1px solid #333"></div>
<svg style="left:907px;top:479px" width="11" height="11"><path d="M1.5 5.5 L4.3 8.5 L9.8 2" fill="none" stroke="#222" stroke-width="1.2"/></svg>
<div class="pl" style="left:922px;top:479px">Настройки проекта</div>
<div class="a" style="left:1043px;top:473px;width:31px;height:23px;background:#e4e4e4;border:1px solid #bdbdbd;border-right:none"></div>
<div class="a" style="left:1046px;top:476px;width:26px;height:17px;background:#fff;border:1px solid #222"></div>

<div class="sh" style="top:510px"><div class="tri"></div><span>Доступность</span></div>
<div class="sh" style="top:532px"><div class="tri"></div><span>Событие</span></div>

<div class="a" style="left:0;top:95px;width:1px;height:581px;background:#2a4a72"></div>
<!-- ================= STATUS ================= -->
<div class="a" style="left:0;top:676px;width:1092px;height:24px;background:#1c66cf"></div>
<div class="t" style="left:7px;top:682px;color:#fff;font-size:12px">Готов</div>
<div class="a" style="left:834px;top:688px;width:9px;height:2px;background:#fff"></div>
<div class="a" style="left:848px;top:688px;width:119px;height:1px;background:#fff"></div>
<div class="a" style="left:905px;top:680px;width:4px;height:17px;background:#fff"></div>
<svg style="left:972px;top:684px" width="10" height="10"><path d="M5 0.5 V9.5 M0.5 5 H9.5" stroke="#fff" stroke-width="2"/></svg>
<div class="t" style="left:993px;top:682px;color:#fff;font-size:12px">100%</div>
<div class="a" style="left:1037px;top:680px;width:16px;height:16px;border:1.5px solid #fff"></div>
<div class="a" style="left:1043px;top:683px;width:0;height:0;border-left:2px solid transparent;border-right:2px solid transparent;border-bottom:2px solid #fff"></div>
<div class="a" style="left:1043px;top:691px;width:0;height:0;border-left:2px solid transparent;border-right:2px solid transparent;border-top:2px solid #fff"></div>
<div class="a" style="left:1040px;top:686px;width:0;height:0;border-top:2px solid transparent;border-bottom:2px solid transparent;border-right:2px solid #fff"></div>
<div class="a" style="left:1048px;top:686px;width:0;height:0;border-top:2px solid transparent;border-bottom:2px solid transparent;border-left:2px solid #fff"></div>

</body></html>
